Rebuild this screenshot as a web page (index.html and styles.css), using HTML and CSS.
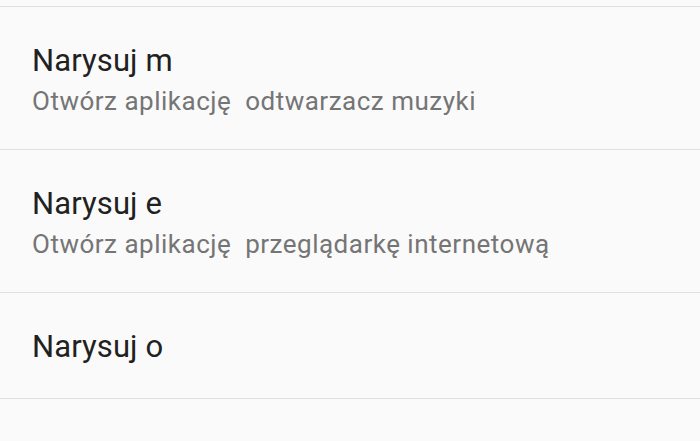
FILE: index.html
```html
<!DOCTYPE html>
<html lang="pl">
<head>
<meta charset="utf-8">
<link rel="stylesheet" href="styles.css">
</head>
<body>
<div class="list">
  <div class="item">
    <div class="title">Narysuj m</div>
    <div class="subtitle">Otwórz aplikację  odtwarzacz muzyki</div>
  </div>
  <div class="item">
    <div class="title">Narysuj e</div>
    <div class="subtitle">Otwórz aplikację  przeglądarkę internetową</div>
  </div>
  <div class="item">
    <div class="title">Narysuj o</div>
  </div>
  <div class="item empty"></div>
</div>
</body>
</html>
```

FILE: styles.css
```css
html, body {
  margin: 0;
  padding: 0;
  background: #fafafa;
  font-family: Roboto, "Noto Sans", sans-serif;
}
.list {
  padding-top: 6px;
}
.item {
  border-top: 1px solid #e0e0e0;
  padding: 36px 32px 33px;
}
.item.empty {
  height: 60px;
  padding: 0;
}
.title {
  font-size: 31px;
  line-height: 36px;
  letter-spacing: 0.1px;
  color: #212121;
}
.subtitle {
  margin-top: 7px;
  font-size: 26px;
  line-height: 30px;
  letter-spacing: 0.5px;
  color: #757575;
  white-space: pre;
}
```
